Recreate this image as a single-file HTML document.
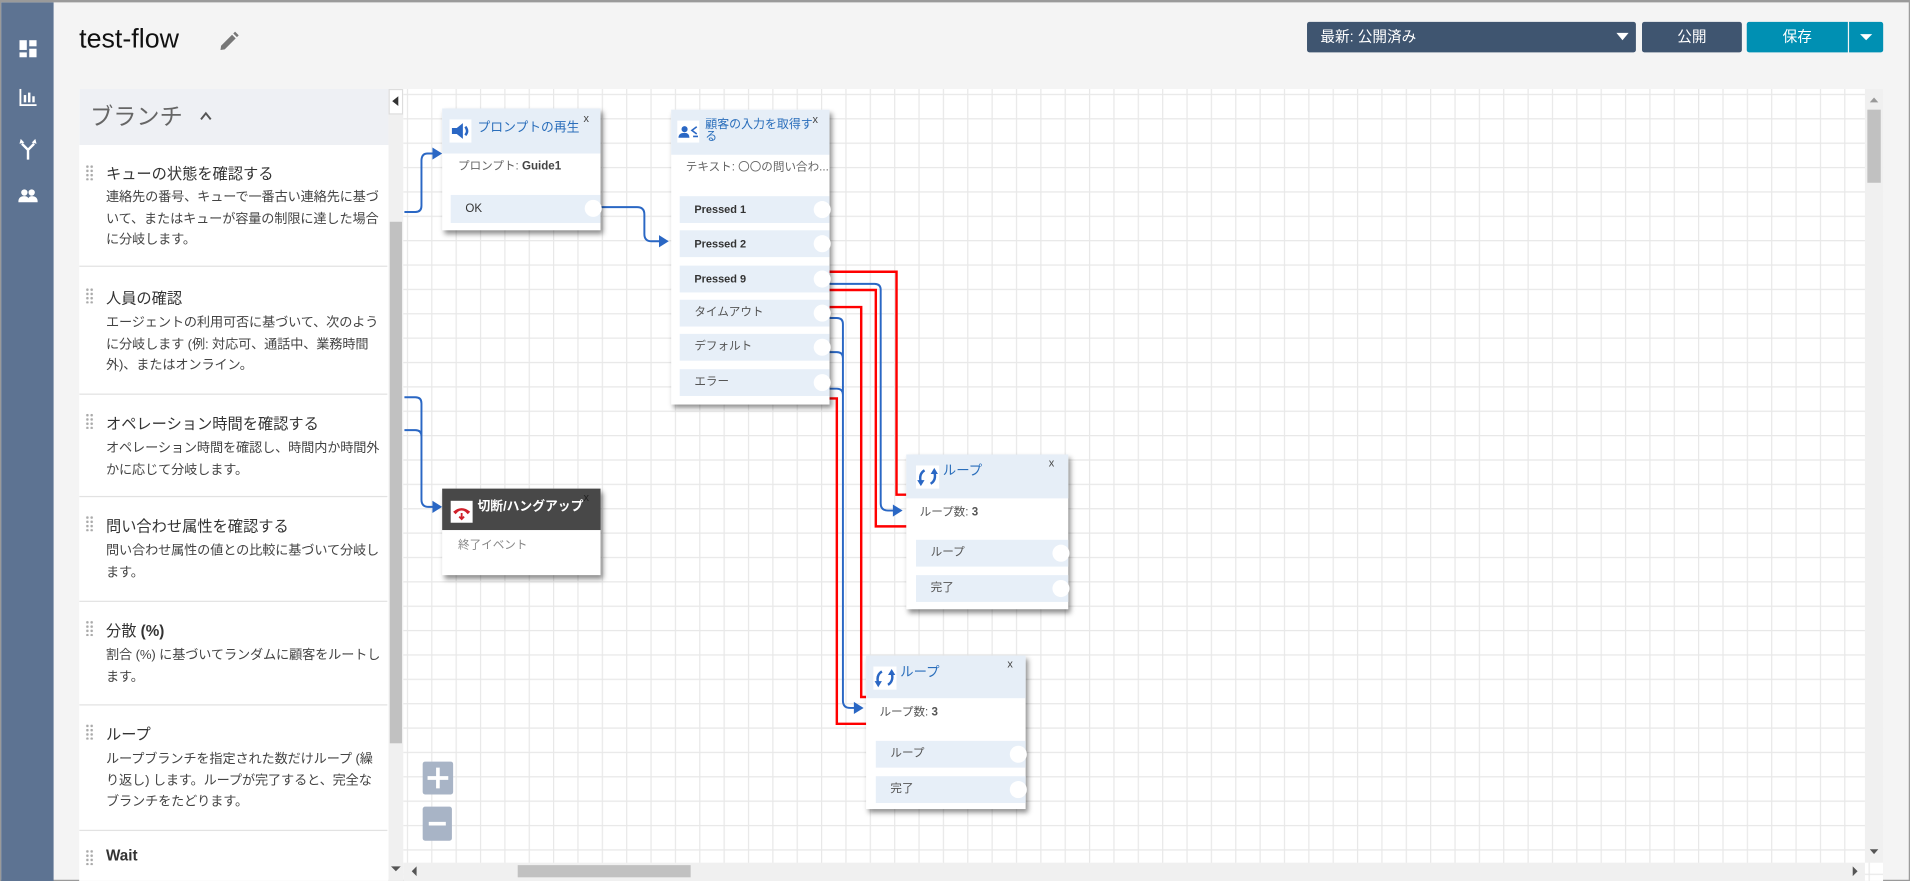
<!DOCTYPE html>
<html><head><meta charset="utf-8">
<style>
*{margin:0;padding:0;box-sizing:border-box}
html,body{width:1910px;height:881px;overflow:hidden;background:#f4f4f4}
#w{position:absolute;left:0;top:0;width:1568px;height:723px;transform:scale(1.2181,1.2185);transform-origin:0 0;font-family:"Liberation Sans","Noto Sans CJK JP",sans-serif;background:#f4f4f4;border:1px solid #9a9a9a;border-top:2px solid #9a9a9a}
.a{position:absolute}
.side{left:0;top:0;width:43px;height:721px;background:#5d7392}
.item{position:absolute;left:0;width:253px;border-bottom:1px solid #e2e2e2}
.item .t{position:absolute;left:22px;font-size:12.5px;color:#333}
.item .d{position:absolute;left:22px;width:226px;font-size:10.8px;line-height:17.5px;color:#444;letter-spacing:-0.1px}
.item .h{position:absolute;left:5px;width:7px;height:13px;background-image:radial-gradient(#aaa 1px,transparent 1.2px);background-size:3.5px 3.5px}
.node{position:absolute;background:#fff;box-shadow:2px 3px 4px rgba(0,0,0,.45);font-size:10px}
.hd{position:absolute;left:0;top:0;right:0;background:#e6eef7}
.ic{position:absolute;background:#fff}
.ttl{position:absolute;color:#2a6ebb;font-size:11px;line-height:11px}
.x{position:absolute;font-size:9px;color:#444}
.row{position:absolute;right:0;background:#e7eff8;font-size:9.5px;color:#333;padding-left:12px;line-height:22px}
.row:after{content:"";position:absolute;right:-1px;top:4px;width:14px;height:14px;border-radius:50%;background:#fff}
.bd{position:absolute;color:#666;font-size:9.5px}
</style></head><body>
<div id="w">
<div class="a side">
<svg class="a" style="left:14px;top:30px" width="16" height="150" viewBox="0 0 16 150">
<g fill="#fff">
<rect x="1" y="1" width="6" height="8"/><rect x="9" y="1" width="6" height="5"/><rect x="1" y="11" width="6" height="4"/><rect x="9" y="8" width="6" height="7"/>
<rect x="1" y="41" width="1.5" height="14"/><rect x="1" y="53.5" width="14" height="1.5"/><rect x="4.5" y="46" width="2" height="6"/><rect x="8" y="44" width="2" height="8"/><rect x="11.5" y="47" width="2" height="5"/>
<path d="M8 99 V91 L3 86 M8 91 L13 86" stroke="#fff" stroke-width="2" fill="none"/><path d="M1 86 L5 85 L2 82Z M15 86 L11 85 L14 82Z"/>
<circle cx="5" cy="126" r="2.6"/><circle cx="11" cy="126" r="2.6"/><path d="M0 134 Q0 129 5 129 Q9 129 9 134Z M7 134 Q8 129 11 129 Q16 129 16 134Z"/>
</g></svg>
</div>
<div class="a" style="left:64px;top:17px;font-size:22px;color:#111">test-flow</div>
<svg class="a" style="left:179px;top:24px" width="16" height="16" viewBox="0 0 16 16"><path d="M1 15 L1.5 11.5 L10.5 2.5 L13.5 5.5 L4.5 14.5Z M11.5 1.5 L13 0 L16 3 L14.5 4.5Z" fill="#777"/></svg>
<div class="a" style="left:1072px;top:16px;width:270px;height:25px;background:#3f5570;border-radius:2px;color:#fff;font-size:12px;line-height:25px;padding-left:11px">最新: 公開済み<span class="a" style="right:6px;top:9px;border:5px solid transparent;border-top:6px solid #fff;border-bottom:0"></span></div>
<div class="a" style="left:1347px;top:16px;width:82px;height:25px;background:#3f5570;border-radius:2px;color:#fff;font-size:12px;line-height:25px;text-align:center">公開</div>
<div class="a" style="left:1433px;top:16px;width:83px;height:25px;background:#0090b3;border-radius:2px 0 0 2px;color:#fff;font-size:12px;line-height:25px;text-align:center">保存</div>
<div class="a" style="left:1517px;top:16px;width:28px;height:25px;background:#0090b3;border-radius:0 2px 2px 0"><span class="a" style="left:9px;top:10px;border:5px solid transparent;border-top:5px solid #fff;border-bottom:0"></span></div>

<div class="a" style="left:64px;top:71px;width:254px;height:650px;background:#fff;overflow:hidden">
<div class="a" style="left:0;top:0;width:254px;height:46px;background:#eef0f4"></div>
<div class="a" style="left:9px;top:8px;font-size:19px;color:#666">ブランチ</div>
<svg class="a" style="left:98px;top:17px" width="12" height="10"><path d="M2 8 L6 3 L10 8" stroke="#555" stroke-width="1.6" fill="none"/></svg>
<div class="item" style="top:46px;height:100px"><span class="h" style="top:16px"></span><div class="t" style="top:13px">キューの状態を確認する</div><div class="d" style="top:35px">連絡先の番号、キューで一番古い連絡先に基づいて、またはキューが容量の制限に達した場合に分岐します。</div></div>
<div class="item" style="top:146px;height:105px"><span class="h" style="top:17px"></span><div class="t" style="top:15px">人員の確認</div><div class="d" style="top:38px">エージェントの利用可否に基づいて、次のように分岐します (例: 対応可、通話中、業務時間外)、またはオンライン。</div></div>
<div class="item" style="top:251px;height:84px"><span class="h" style="top:15px"></span><div class="t" style="top:13px">オペレーション時間を確認する</div><div class="d" style="top:36px">オペレーション時間を確認し、時間内か時間外かに応じて分岐します。</div></div>
<div class="item" style="top:335px;height:86px"><span class="h" style="top:15px"></span><div class="t" style="top:13px">問い合わせ属性を確認する</div><div class="d" style="top:36px">問い合わせ属性の値との比較に基づいて分岐します。</div></div>
<div class="item" style="top:421px;height:85px"><span class="h" style="top:15px"></span><div class="t" style="top:13px">分散 <b>(%)</b></div><div class="d" style="top:36px">割合 (%) に基づいてランダムに顧客をルートします。</div></div>
<div class="item" style="top:506px;height:103px"><span class="h" style="top:15px"></span><div class="t" style="top:13px">ループ</div><div class="d" style="top:36px">ループブランチを指定された数だけループ (繰り返し) します。ループが完了すると、完全なブランチをたどります。</div></div>
<div class="item" style="top:609px;height:60px;border:0"><span class="h" style="top:15px"></span><div class="t" style="top:13px;font-weight:bold">Wait</div></div>
</div>
<div class="a" style="left:318px;top:71px;width:12px;height:650px;background:#f0f0f0"></div>
<div class="a" style="left:318px;top:71px;width:12px;height:21px;background:#fff;border:1px solid #ddd"><span class="a" style="left:2px;top:5px;border:4px solid transparent;border-right:5px solid #333;border-left:0"></span></div>
<div class="a" style="left:319px;top:180px;width:10px;height:428px;background:#c1c1c1"></div>
<span class="a" style="left:320px;top:709px;border:4px solid transparent;border-top:4px solid #555;border-bottom:0"></span>

<svg class="a" style="left:330px;top:71px" width="1215" height="650" viewBox="330 71 1215 650">
<defs><pattern id="g" x="333" y="75" width="20" height="20" patternUnits="userSpaceOnUse"><path d="M0 0.5 H20 M0.5 0 V20" stroke="#e8e8e8" stroke-width="1" fill="none"/></pattern></defs>
<rect x="330" y="71" width="1215" height="650" fill="#fff"/>
<rect x="330" y="71" width="1215" height="650" fill="url(#g)"/>
<g stroke="#2a67c4" stroke-width="1.6" fill="none">
<path d="M331 172 H340 Q345 172 345 167 V130 Q345 124 350 124 H356"/>
<path d="M492 168 H522 Q528 168 528 174 V190 Q528 196 534 196 H542"/>
<path d="M331 324 H340 Q345 324 345 329 V408 Q345 414 351 414 H356 M331 351 H340 Q345 351 345 356"/>
<path d="M680 231 H717 Q722 231 722 236 V411 Q722 417 728 417 H734"/>
<path d="M680 259 H686 Q691 259 691 264 V573 Q691 579 697 579 H702 M680 287 H686 Q691 287 691 292 M680 317 H686 Q691 317 691 322"/>
</g>
<g fill="#2a67c4"><path d="M354 119 L362 124 L354 129Z"/><path d="M540 191 L548 196 L540 201Z"/><path d="M354 409 L362 414 L354 419Z"/><path d="M732 412 L740 417 L732 422Z"/><path d="M700 574 L708 579 L700 584Z"/></g>
<g stroke="#f00" stroke-width="2" fill="none">
<path d="M661 221 H735 V404 H756 V430 H718 V236 H661Z"/>
<path d="M661 250 H706 V570 H717 V592 H686 V325 H661Z"/>
</g>
<rect x="330" y="706" width="1200" height="15" fill="#f0f0f0"/>
<rect x="424" y="708" width="142" height="10" fill="#c1c1c1"/>
<path d="M341 709 L337 713 L341 717Z" fill="#555"/><path d="M1520 709 L1524 713 L1520 717Z" fill="#555"/>
<rect x="1530" y="71" width="15" height="635" fill="#f0f0f0"/>
<rect x="1532" y="88" width="11" height="60" fill="#c1c1c1"/>
<path d="M1534 82 L1537.5 78 L1541 82Z" fill="#999"/><path d="M1534 695 L1537.5 699 L1541 695Z" fill="#555"/>
<rect x="346" y="623" width="25" height="27" rx="2" fill="#a8b4c6"/><path d="M358.5 628 V645 M350 636.5 H367" stroke="#fff" stroke-width="3"/>
<rect x="346" y="660" width="24" height="28" rx="2" fill="#a8b4c6"/><path d="M351 674 H365" stroke="#fff" stroke-width="3"/>
</svg>

<div class="node" style="left:362px;top:87px;width:130px;height:100px">
<div class="hd" style="height:37px"></div>
<div class="ic" style="left:6px;top:9px;width:18px;height:19px"><svg width="18" height="19"><path d="M2 7 H6 L11 3 V16 L6 12 H2Z" fill="#2a67c4"/><path d="M13 6 Q16 9.5 13 13" stroke="#2a67c4" stroke-width="2" fill="none"/></svg></div>
<div class="ttl" style="left:29px;top:11px;font-size:10.5px">プロンプトの再生</div>
<div class="x" style="left:116px;top:3px">x</div>
<div class="bd" style="left:13px;top:39px">プロンプト: <b style="color:#444">Guide1</b></div>
<div class="row" style="left:7px;top:71px;height:23px;line-height:23px">OK</div>
</div>
<div class="node" style="left:550px;top:88px;width:130px;height:242px">
<div class="hd" style="height:37px"></div>
<div class="ic" style="left:5px;top:9px;width:18px;height:18px"><svg width="18" height="18"><circle cx="6" cy="7" r="2.5" fill="#2a67c4"/><path d="M1 14 Q1 10 6 10 Q10 10 10 14Z" fill="#2a67c4"/><path d="M16 5 L12 8 L16 11 M13 13 H17" stroke="#2a67c4" stroke-width="1.3" fill="none"/></svg></div>
<div class="ttl" style="left:28px;top:8px;width:92px;line-height:10px;font-size:9.8px">顧客の入力を取得する</div>
<div class="x" style="left:116px;top:3px">x</div>
<div class="bd" style="left:12px;top:39px">テキスト: 〇〇の問い合わ...</div>
<div class="row" style="left:7px;top:71px;height:22px;font-weight:bold;font-size:9px">Pressed 1</div>
<div class="row" style="left:7px;top:99px;height:22px;font-weight:bold;font-size:9px">Pressed 2</div>
<div class="row" style="left:7px;top:128px;height:22px;font-weight:bold;font-size:9px">Pressed 9</div>
<div class="row" style="left:7px;top:156px;height:22px;color:#555">タイムアウト</div>
<div class="row" style="left:7px;top:184px;height:22px;color:#555">デフォルト</div>
<div class="row" style="left:7px;top:213px;height:22px;color:#555">エラー</div>
</div>
<div class="node" style="left:362px;top:399px;width:130px;height:71px">
<div class="hd" style="height:34px;background:#484848"></div>
<div class="ic" style="left:7px;top:10px;width:18px;height:18px"><svg width="18" height="18"><path d="M2 9 Q9 3 16 9 L14 11 L12 9 Q9 7 6 9 L4 11Z" fill="#d0202a"/><path d="M9 10 V15 M7 13 L9 15 L11 13" stroke="#d0202a" stroke-width="1.5" fill="none"/></svg></div>
<div class="ttl" style="left:29px;top:10px;color:#fff;font-weight:bold;font-size:10.5px">切断/ハングアップ</div>
<div class="x" style="left:116px;top:2px;color:#222">x</div>
<div class="bd" style="left:13px;top:38px;color:#888">終了イベント</div>
</div>
<div class="node" style="left:743px;top:371px;width:133px;height:127px">
<div class="hd" style="height:36px"></div>
<div class="ic" style="left:8px;top:9px;width:19px;height:19px"><svg width="19" height="19"><path d="M7 4 Q2 7 4 14 M12 15 Q17 12 15 5" stroke="#2a67c4" stroke-width="2" fill="none"/><path d="M1 12 L4 17 L7 12Z M12 7 L15 2 L18 7Z" fill="#2a67c4"/></svg></div>
<div class="ttl" style="left:30px;top:9px">ループ</div>
<div class="x" style="left:117px;top:2px">x</div>
<div class="bd" style="left:11px;top:39px;color:#555">ループ数: <b>3</b></div>
<div class="row" style="left:8px;top:70px;height:22px;color:#555">ループ</div>
<div class="row" style="left:8px;top:99px;height:22px;color:#555">完了</div>
</div>
<div class="node" style="left:710px;top:536px;width:131px;height:126px">
<div class="hd" style="height:35px"></div>
<div class="ic" style="left:6px;top:9px;width:19px;height:19px"><svg width="19" height="19"><path d="M7 4 Q2 7 4 14 M12 15 Q17 12 15 5" stroke="#2a67c4" stroke-width="2" fill="none"/><path d="M1 12 L4 17 L7 12Z M12 7 L15 2 L18 7Z" fill="#2a67c4"/></svg></div>
<div class="ttl" style="left:28px;top:9px">ループ</div>
<div class="x" style="left:116px;top:2px">x</div>
<div class="bd" style="left:11px;top:38px;color:#555">ループ数: <b>3</b></div>
<div class="row" style="left:8px;top:70px;height:22px;color:#555">ループ</div>
<div class="row" style="left:8px;top:99px;height:22px;color:#555">完了</div>
</div>
</div>
</body></html>
